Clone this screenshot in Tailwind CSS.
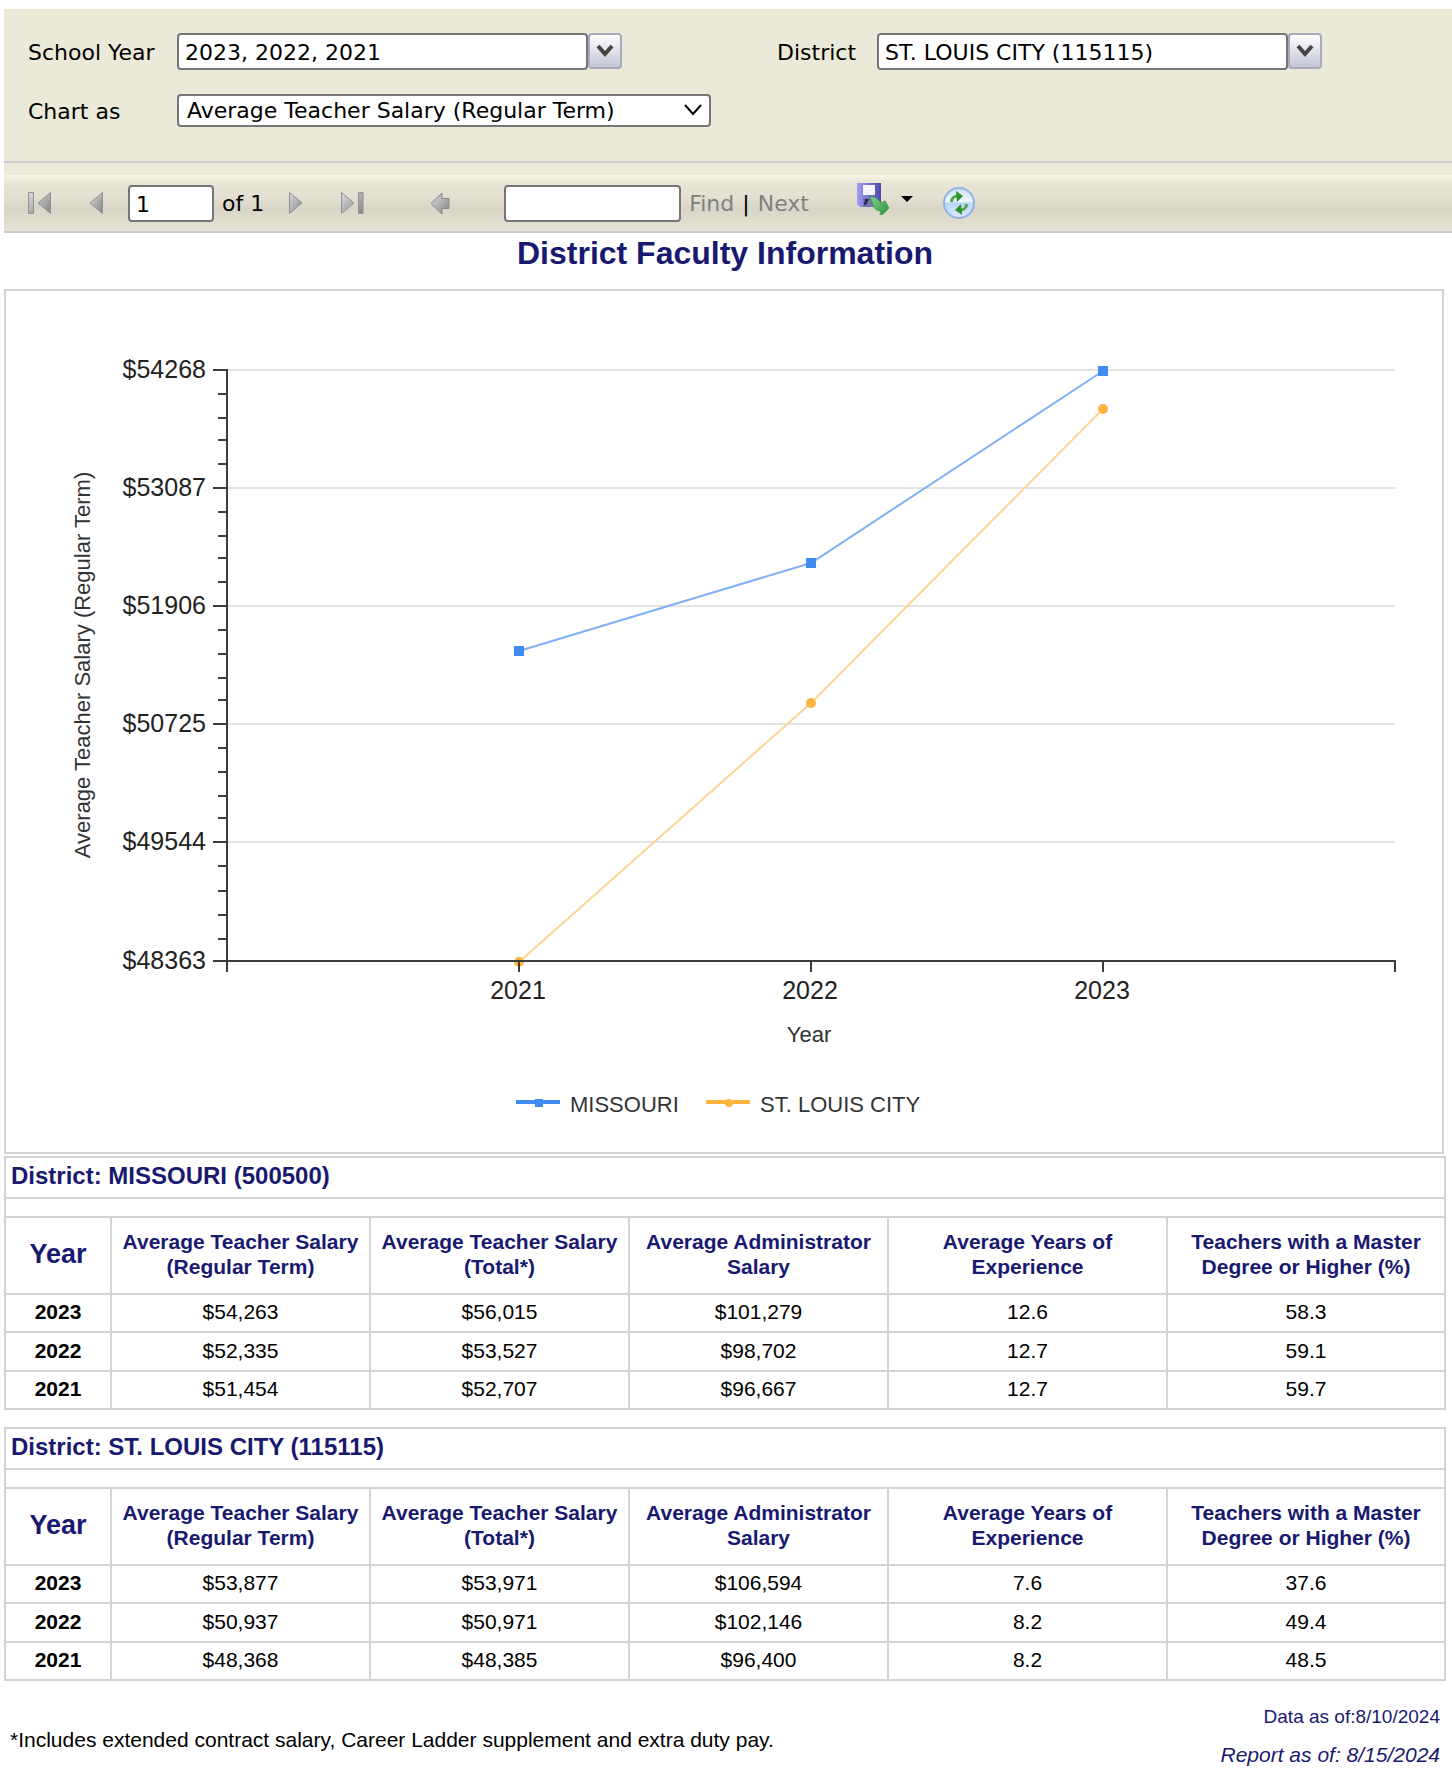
<!DOCTYPE html>
<html lang="en">
<head>
    <meta charset="UTF-8">
    <meta name="viewport" content="width=device-width, initial-scale=1.0">
    <title>District Faculty Information</title>
    <script src="https://cdn.jsdelivr.net/npm/@tailwindcss/browser@4"></script>
</head>
<body class="bg-white text-black font-['Liberation_Sans',Arial,sans-serif]">
    <div class="pt-[9px] pl-1">
        <!-- Report parameters -->
        <form class="bg-[#ebe9d7] border-b-2 border-[#cbcbcb] pt-6 pb-[34px] pl-6 grid grid-cols-[149px_600px_100px_1fr] gap-y-6 items-center text-[22px] leading-7 font-['DejaVu_Sans',Verdana,sans-serif] [&_label]:pt-0.5">
            <label for="school-year">School Year</label>
            <div class="flex">
                <input type="text" id="school-year" value="2023, 2022, 2021" class="w-[411px] h-[37px] pt-0.5 px-1.5 bg-white border-2 border-[#767676] rounded-sm">
                <button type="button" aria-label="Choose school years" class="w-[34px] h-9 flex items-center justify-center border-2 border-[#a9a9bd] rounded-sm bg-linear-to-b from-white to-[#c4c5d6]">
                    <svg class="w-5 h-4" viewBox="0 0 20 16" fill="none" stroke="#444" stroke-width="4"><path d="M3 3l7 8 7-8"/></svg>
                </button>
            </div>
            <label for="district">District</label>
            <div class="flex">
                <input type="text" id="district" value="ST. LOUIS CITY (115115)" class="w-[411px] h-[37px] pt-0.5 px-1.5 bg-white border-2 border-[#767676] rounded-sm">
                <button type="button" aria-label="Choose districts" class="w-[34px] h-9 flex items-center justify-center border-2 border-[#a9a9bd] rounded-sm bg-linear-to-b from-white to-[#c4c5d6]">
                    <svg class="w-5 h-4" viewBox="0 0 20 16" fill="none" stroke="#444" stroke-width="4"><path d="M3 3l7 8 7-8"/></svg>
                </button>
            </div>
            <label for="chart-as">Chart as</label>
            <div class="relative w-[534px]">
                <select id="chart-as" class="block appearance-none w-full h-[33px] pt-px px-2 bg-white border-2 border-[#767676] rounded-sm">
                    <option>Average Teacher Salary (Regular Term)</option>
                </select>
                <svg class="absolute right-2 top-2.5 w-5 h-3 pointer-events-none" viewBox="0 0 20 12" fill="none" stroke="#000" stroke-width="2"><path d="M2 1l8 9 8-9"/></svg>
            </div>
        </form>

        <!-- Toolbar -->
        <div class="bg-[#ebe9d7] pt-3 border-b-2 border-[#cbcbcb]">
            <div class="h-14 pl-6 flex items-center text-[22px] leading-7 font-['DejaVu_Sans',Verdana,sans-serif] bg-[linear-gradient(#f8f5e4,#e9e6d8_12%,#e3e0d1_40%,#d9d5c6_60%,#dfdbcc_75%,#e5e2d3)]">
                <svg width="0" height="0" class="absolute">
                    <defs>
                        <linearGradient id="metal" x1="0" y1="0" x2="1" y2="1">
                            <stop offset="0" stop-color="#dcdcdc"/>
                            <stop offset="1" stop-color="#858585"/>
                        </linearGradient>
                    </defs>
                </svg>
                <button type="button" aria-label="First page">
                    <svg class="w-6 h-6" viewBox="0 0 24 24" fill="url(#metal)" stroke="#929292"><path d="M.5 1.500h5v21h-5zM22.500 1.500v21L10 12z"/></svg>
                </button>
                <button type="button" aria-label="Previous page" class="ml-9">
                    <svg class="w-4 h-6" viewBox="0 0 16 24" fill="url(#metal)" stroke="#929292"><path d="M14.500 1.500v21L2 12z"/></svg>
                </button>
                <input type="text" aria-label="Current page" value="1" class="ml-6 w-[86px] h-[37px] pt-0.5 px-1.5 bg-white border-2 border-[#767676] rounded-sm">
                <span class="ml-2 pt-0.5">of 1</span>
                <button type="button" aria-label="Next page" class="ml-6">
                    <svg class="w-4 h-6" viewBox="0 0 16 24" fill="url(#metal)" stroke="#929292"><path d="M1.500 1.500v21L14 12z"/></svg>
                </button>
                <button type="button" aria-label="Last page" class="ml-9">
                    <svg class="w-6 h-6" viewBox="0 0 24 24" fill="url(#metal)" stroke="#929292"><path d="M18.500 1.500h4.500v21h-4.500zM1.500 1.500v21L14 12z"/></svg>
                </button>
                <button type="button" aria-label="Back to parent report" class="ml-[66px]">
                    <svg class="w-5 h-6" viewBox="0 0 20 24" fill="url(#metal)" stroke="#888"><path d="M1 12.500L12 2v5.500h7v10h-7V23z"/></svg>
                </button>
                <input type="text" aria-label="Find text" class="ml-[54px] w-[177px] h-[37px] pt-0.5 px-1.5 bg-white border-2 border-[#767676] rounded-sm">
                <a href="#" class="ml-2 pt-0.5 text-[#808080]">Find</a>
                <span class="mx-2 pt-0.5">|</span>
                <a href="#" class="pt-0.5 text-[#808080]">Next</a>
                <button type="button" aria-label="Export" class="ml-12 pb-2 flex items-center gap-3">
                    <svg class="w-8 h-8" viewBox="0 0 32 32">
                        <defs>
                            <linearGradient id="disk" x1="0" y1="0" x2="1" y2="0">
                                <stop offset="0" stop-color="#a09df5"/>
                                <stop offset="1" stop-color="#4a48ac"/>
                            </linearGradient>
                            <linearGradient id="leaf" x1="0" y1="0" x2="1" y2="1">
                                <stop offset="0" stop-color="#80d38c"/>
                                <stop offset="1" stop-color="#2f8f43"/>
                            </linearGradient>
                        </defs>
                        <path d="M0 0h24v24H3l-3-3z" fill="url(#disk)"/>
                        <path d="M6 2h12v10H6z" fill="#f6f6ff"/>
                        <path d="M6 15h13v9H6z" fill="#7775b0"/>
                        <path d="M8 16h4l-3 6H7z" fill="#25254d"/>
                        <path d="M13 14c4-1 8 2 11 6l4-2v0l4 7-7 7h-2l1-4c-5 0-8-4-9-9z" fill="url(#leaf)" stroke="#3f9f52"/>
                    </svg>
                    <svg class="w-3 h-2" viewBox="0 0 12 8"><path d="M0 1h12L6 7z"/></svg>
                </button>
                <button type="button" aria-label="Refresh" class="ml-[30px]">
                    <svg class="w-8 h-8" viewBox="0 0 32 32">
                        <defs>
                            <linearGradient id="orb" x1="0" y1="0" x2="0" y2="1">
                                <stop offset="0" stop-color="#cfe0f8"/>
                                <stop offset=".45" stop-color="#eef5ff"/>
                                <stop offset=".5" stop-color="#b9d5fb"/>
                                <stop offset="1" stop-color="#dcebff"/>
                            </linearGradient>
                        </defs>
                        <circle cx="16" cy="16" r="15" fill="url(#orb)" stroke="#8fb3e2" stroke-width="2"/>
                        <path d="M8.500 15c0-4 3-6 6-6" fill="none" stroke="#4aa83f" stroke-width="3"/>
                        <path d="M13 4l7 5-6 6z" fill="#2f9127"/>
                        <path d="M23.500 17c0 4-3 6-6 6" fill="none" stroke="#4aa83f" stroke-width="3"/>
                        <path d="M19 28l-7-5 6-6z" fill="#2f9127"/>
                    </svg>
                </button>
            </div>
        </div>

        <div class="pr-1.5">
            <h1 class="mb-4 text-[32px] leading-10 font-bold text-center text-[#191970]">District Faculty Information</h1>

            <!-- Salary chart -->
            <div class="mr-0.5 mb-0.5 border-2 border-[#d3d3d3]">
                <svg class="block w-full h-auto" viewBox="0 0 1436 861" role="img" aria-label="Average teacher salary by year">
                    <path d="M222 79h1167M222 197h1167M222 315h1167M222 433h1167M222 551h1167" stroke="#e4e4e4" stroke-width="2"/>

                    <g fill="none" stroke-width="2">
                        <path d="M513 360L805 272 1097 80" stroke="#80b0f6"/>
                        <path d="M513 671L805 412 1097 118" stroke="#fdd595"/>
                    </g>
                    <path d="M508 355h10v10h-10zM800 267h10v10h-10zM1092 75h10v10h-10z" fill="#418cf0"/>
                    <g fill="#fcb441">
                        <circle cx="513" cy="671" r="5"/>
                        <circle cx="805" cy="412" r="5"/>
                        <circle cx="1097" cy="118" r="5"/>
                    </g>

                    <!-- Axes, major ticks, minor ticks -->
                    <g stroke="#3c3c3c" stroke-width="2">
                        <path d="M221 78v603M207 670h1183"/>
                        <path d="M207 79h14M207 197h14M207 315h14M207 433h14M207 551h14"/>
                        <path d="M212 103h9M212 127h9M212 149h9M212 173h9M212 221h9M212 245h9M212 267h9M212 291h9M212 339h9M212 363h9M212 387h9M212 409h9M212 457h9M212 481h9M212 505h9M212 527h9M212 575h9M212 600h9M212 624h9M212 648h9"/>
                        <path d="M513 670v11M805 670v11M1097 670v11M1389 670v11"/>
                    </g>

                    <g fill="#222" font-size="25" text-anchor="end">
                        <text x="200" y="87">$54268</text>
                        <text x="200" y="205">$53087</text>
                        <text x="200" y="323">$51906</text>
                        <text x="200" y="441">$50725</text>
                        <text x="200" y="559">$49544</text>
                        <text x="200" y="678">$48363</text>
                    </g>
                    <g fill="#222" font-size="25" text-anchor="middle">
                        <text x="512" y="708">2021</text>
                        <text x="804" y="708">2022</text>
                        <text x="1096" y="708">2023</text>
                    </g>
                    <g fill="#333" font-size="22">
                        <text x="803" y="751" text-anchor="middle">Year</text>
                        <text transform="translate(84 374) rotate(-90)" text-anchor="middle">Average Teacher Salary (Regular Term)</text>
                        <text x="564" y="821">MISSOURI</text>
                        <text x="754" y="821">ST. LOUIS CITY</text>
                    </g>

                    <path d="M510 811h44" stroke="#418cf0" stroke-width="4"/>
                    <path d="M529 808h8v8h-8z" fill="#418cf0"/>
                    <path d="M700 811h44" stroke="#fcb441" stroke-width="4"/>
                    <circle cx="723" cy="812" r="4" fill="#fcb441"/>
                </svg>
            </div>

            <!-- Statewide figures -->
            <table class="w-full table-fixed border-collapse text-[21px] leading-[25px] text-center [&_td]:border-2 [&_th]:border-2 [&_td]:border-[#d3d3d3] [&_th]:border-[#d3d3d3] [&_td]:p-0 [&_th]:p-0 [&_td]:pb-[3px] [&_th]:pb-[3px]">
                <colgroup>
                    <col class="w-[106px]"><col class="w-[259px]"><col class="w-[259px]"><col class="w-[259px]"><col class="w-[279px]"><col class="w-[278px]">
                </colgroup>
                <thead class="text-[#191970]">
                    <tr class="h-[41px] text-2xl text-left"><th colspan="6"><span class="pl-[5px]">District: MISSOURI (500500)</span></th></tr>
                    <tr class="h-[19px]"><td colspan="6"></td></tr>
                    <tr class="h-[77px]">
                        <th class="text-[27px]">Year</th>
                        <th>Average Teacher Salary (Regular Term)</th>
                        <th>Average Teacher Salary (Total*)</th>
                        <th>Average Administrator<br>Salary</th>
                        <th>Average Years of<br>Experience</th>
                        <th>Teachers with a Master<br>Degree or Higher (%)</th>
                    </tr>
                </thead>
                <tbody>
                    <tr class="h-[38px]"><th>2023</th><td>$54,263</td><td>$56,015</td><td>$101,279</td><td>12.6</td><td>58.3</td></tr>
                    <tr class="h-[39px]"><th>2022</th><td>$52,335</td><td>$53,527</td><td>$98,702</td><td>12.7</td><td>59.1</td></tr>
                    <tr class="h-[38px]"><th>2021</th><td>$51,454</td><td>$52,707</td><td>$96,667</td><td>12.7</td><td>59.7</td></tr>
                </tbody>
            </table>

            <!-- District figures -->
            <table class="mt-[17px] w-full table-fixed border-collapse text-[21px] leading-[25px] text-center [&_td]:border-2 [&_th]:border-2 [&_td]:border-[#d3d3d3] [&_th]:border-[#d3d3d3] [&_td]:p-0 [&_th]:p-0 [&_td]:pb-[3px] [&_th]:pb-[3px]">
                <colgroup>
                    <col class="w-[106px]"><col class="w-[259px]"><col class="w-[259px]"><col class="w-[259px]"><col class="w-[279px]"><col class="w-[278px]">
                </colgroup>
                <thead class="text-[#191970]">
                    <tr class="h-[41px] text-2xl text-left"><th colspan="6"><span class="pl-[5px]">District: ST. LOUIS CITY (115115)</span></th></tr>
                    <tr class="h-[19px]"><td colspan="6"></td></tr>
                    <tr class="h-[77px]">
                        <th class="text-[27px]">Year</th>
                        <th>Average Teacher Salary (Regular Term)</th>
                        <th>Average Teacher Salary (Total*)</th>
                        <th>Average Administrator<br>Salary</th>
                        <th>Average Years of<br>Experience</th>
                        <th>Teachers with a Master<br>Degree or Higher (%)</th>
                    </tr>
                </thead>
                <tbody>
                    <tr class="h-[38px]"><th>2023</th><td>$53,877</td><td>$53,971</td><td>$106,594</td><td>7.6</td><td>37.6</td></tr>
                    <tr class="h-[39px]"><th>2022</th><td>$50,937</td><td>$50,971</td><td>$102,146</td><td>8.2</td><td>49.4</td></tr>
                    <tr class="h-[38px]"><th>2021</th><td>$48,368</td><td>$48,385</td><td>$96,400</td><td>8.2</td><td>48.5</td></tr>
                </tbody>
            </table>

            <footer class="pt-6 px-1.5 flex items-center justify-between leading-6 text-[21px]">
                <p class="pt-2">*Includes extended contract salary, Career Ladder supplement and extra duty pay.</p>
                <div class="text-right text-[#191970]">
                    <p class="text-[19px]">Data as of:8/10/2024</p>
                    <p class="mt-3.5 italic">Report as of: 8/15/2024</p>
                </div>
            </footer>
        </div>
    </div>
</body>
</html>
